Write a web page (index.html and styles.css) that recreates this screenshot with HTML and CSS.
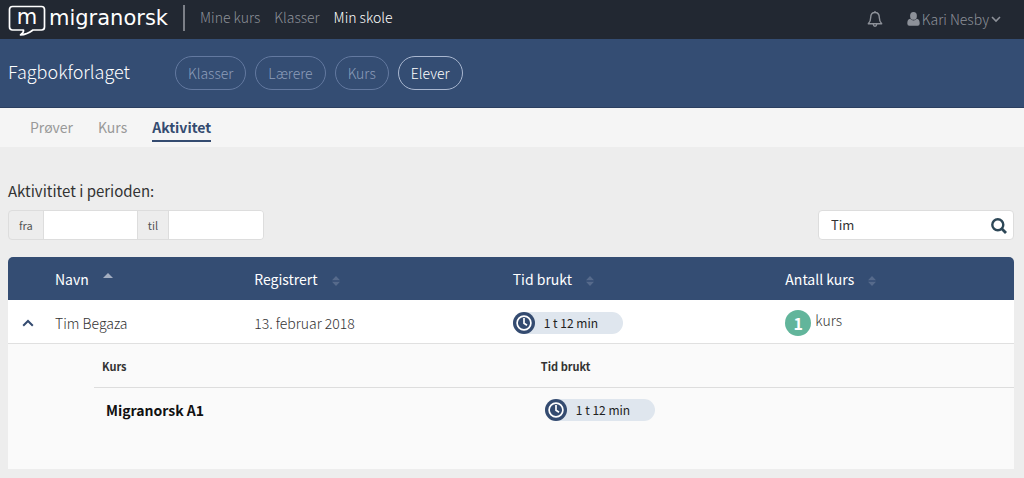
FILE: index.html
```html
<!DOCTYPE html>
<html lang="no">
<head>
<meta charset="utf-8">
<meta name="viewport" content="width=device-width, initial-scale=1">
<title>Migranorsk – Aktivitet</title>
<link rel="stylesheet" href="styles.css">
</head>
<body>
<svg class="defs" aria-hidden="true">
  <symbol id="clock" viewBox="0 0 22 22">
    <circle cx="11" cy="11" r="11" fill="#344b70"/>
    <circle cx="11" cy="11" r="6.9" fill="#344b70" stroke="#fff" stroke-width="1.7"/>
    <path d="M11 6V11.300L14 13.200" fill="none" stroke="#fff" stroke-width="1.700"/>
  </symbol>
  <symbol id="sort" viewBox="0 0 8 10">
    <path d="M0 4.2L4 0l4 4.2zM0 5.8L4 10l4-4.2z" fill="#566a8b"/>
  </symbol>
</svg>
<header class="topbar">
  <a class="brand" href="#">
    <span class="brand-mark">
      <svg class="brand-bubble" viewBox="0 0 38 32" aria-hidden="true"><path d="M4.5 1.500H33.500Q36.500 1.500 36.500 4.500V22Q36.500 25 33.500 25H25Q19 29.500 12.500 30Q16 27.500 15.500 25H4.500Q1.500 25 1.500 22V4.500Q1.500 1.500 4.500 1.500Z" fill="none" stroke="#fff" stroke-width="1.700" stroke-linejoin="round"/></svg>
      <span class="brand-letter">m</span>
    </span>
    <span class="brand-name">migranorsk</span>
  </a>
  <nav class="main-nav">
    <a href="#">Mine kurs</a>
    <a href="#">Klasser</a>
    <a class="active" href="#">Min skole</a>
  </nav>
  <div class="account">
    <button class="bell" type="button" aria-label="Varsler">
      <svg viewBox="0 0 16 18" width="16" height="18" fill="none" stroke="currentColor" stroke-width="1.4" stroke-linejoin="round"><path d="M8 1v1.500M8 2.500C5 2.500 3.700 4.800 3.700 7.500C3.700 10.500 2.900 12.200 1.300 13.800H14.700C13.100 12.200 12.300 10.500 12.300 7.500C12.300 4.800 11 2.500 8 2.500ZM6.300 14.500Q6.500 16.200 8 16.200T9.700 14.500"/></svg>
    </button>
    <button class="user" type="button">
      <svg viewBox="0 0 13 14" width="13" height="14" fill="currentColor"><ellipse cx="6.500" cy="3.900" rx="3.400" ry="3.900"/><path d="M3.200 6.700C1 7 .3 9 .3 11.500Q.3 13.700 2.300 13.700H10.700Q12.700 13.700 12.700 11.500C12.700 9 12 7 9.800 6.700Q8.500 8.400 6.500 8.400T3.200 6.700Z"/></svg>
      <span>Kari Nesby</span>
      <svg viewBox="0 0 10 7" width="10" height="7" fill="none" stroke="currentColor" stroke-width="1.600"><path d="M1 1l4 4 4-4"/></svg>
    </button>
  </div>
</header>
<div class="school-bar">
  <h1 class="school">Fagbokforlaget</h1>
  <nav class="pills">
    <a href="#">Klasser</a>
    <a href="#">Lærere</a>
    <a href="#">Kurs</a>
    <a class="active" href="#">Elever</a>
  </nav>
</div>
<nav class="tabs">
  <a href="#">Prøver</a>
  <a href="#">Kurs</a>
  <a class="active" href="#">Aktivitet</a>
</nav>
<main class="content">
  <h2 class="period-title">Aktivititet i perioden:</h2>
  <div class="filters">
    <div class="period">
      <label for="from">fra</label><input id="from" type="text">
      <label for="to">til</label><input id="to" type="text">
    </div>
    <div class="search">
      <input type="text" value="Tim" aria-label="Søk">
      <button type="button" aria-label="Søk"><svg viewBox="0 0 16 16" width="16" height="16" fill="none" stroke="#2d4757"><circle cx="6.800" cy="6.800" r="5.500" stroke-width="2.400"/><path d="M10.800 10.800l4.200 4.200" stroke-width="2.800"/></svg></button>
    </div>
  </div>
  <table class="students">
    <colgroup><col class="col-toggle"><col class="col-name"><col class="col-date"><col class="col-time"><col></colgroup>
    <thead>
      <tr>
        <th></th>
        <th>Navn<svg class="sort-up" viewBox="0 0 10 5" aria-hidden="true"><path d="M0 5L5 0l5 5z" fill="#a3aec1"/></svg></th>
        <th>Registrert<svg class="sort"><use href="#sort"/></svg></th>
        <th>Tid brukt<svg class="sort"><use href="#sort"/></svg></th>
        <th>Antall kurs<svg class="sort"><use href="#sort"/></svg></th>
      </tr>
    </thead>
    <tbody>
      <tr class="student">
        <td><button class="toggle" type="button" aria-label="Skjul kurs"><svg viewBox="0 0 12 8" width="12" height="8" fill="none" stroke="#344b70" stroke-width="2"><path d="M1.200 6.800L6 2l4.800 4.800"/></svg></button></td>
        <td>Tim Begaza</td>
        <td>13. februar 2018</td>
        <td><span class="time"><svg class="clock"><use href="#clock"/></svg>1 t 12 min</span></td>
        <td><span class="count"><b>1</b><span>kurs</span></span></td>
      </tr>
      <tr class="details">
        <td colspan="5">
          <table class="courses">
            <colgroup><col class="col-course"><col></colgroup>
            <thead><tr><th>Kurs</th><th>Tid brukt</th></tr></thead>
            <tbody><tr><td>Migranorsk A1</td><td><span class="time"><svg class="clock"><use href="#clock"/></svg>1 t 12 min</span></td></tr></tbody>
          </table>
        </td>
      </tr>
    </tbody>
  </table>
</main>
</body>
</html>
```
FILE: styles.css
```css
* { box-sizing: border-box; }
body {
  margin: 0;
  background: #ededed;
  color: #333;
  font: 300 14px/20px "Noto Sans CJK SC", "Open Sans", sans-serif;
}
a { color: inherit; text-decoration: none; }
button { padding: 0; border: 0; background: none; color: inherit; font: inherit; cursor: pointer; }
svg { display: block; flex: none; }
.defs { position: absolute; width: 0; height: 0; }

.topbar {
  display: flex;
  align-items: center;
  height: 39px;
  padding: 0 23px 4px 8px;
  background: #222832;
  color: #8d9199;
}
.brand {
  display: flex;
  align-items: center;
  height: 26px;
  padding-right: 15px;
  border-right: 2px solid #7c8088;
  color: #fff;
  font: 400 21px/26px "DejaVu Sans", sans-serif;
}
.brand-mark { position: relative; width: 38px; height: 26px; margin-right: 3px; }
.brand-bubble { position: absolute; top: 0; left: 0; width: 38px; height: 32px; }
.brand-letter { position: absolute; inset: 0; text-align: center; line-height: 25px; }
.brand-name { line-height: 26px; }
.main-nav { display: flex; gap: 14px; margin-left: 15px; padding-bottom: 1px; }
.main-nav .active { color: #fff; }
.account { display: flex; align-items: center; gap: 24px; margin-left: auto; padding-top: 3px; }
.user { display: flex; align-items: center; gap: 2px; }

.school-bar {
  display: flex;
  align-items: center;
  height: 69px;
  padding: 0 8px;
  border-bottom: 1px solid #2b3f60;
  background: #344d73;
}
.school { width: 167px; margin: 0; padding-bottom: 4px; color: #fff; font-size: 18px; font-weight: 300; line-height: 24px; }
.pills { display: flex; gap: 9px; color: #8d9dba; }
.pills a { padding: 6px 12px; border: 1px solid #6379a0; border-radius: 17px; }
.pills .active { border-color: #a9b7d0; color: #fff; }

.tabs {
  display: flex;
  gap: 25px;
  height: 39px;
  padding: 9px 30px 0;
  background: #f5f5f5;
  color: #999;
  font-weight: 400;
}
.tabs a { height: 25px; line-height: 20px; }
.tabs .active { border-bottom: 2px solid #344b70; color: #344b70; font-weight: 700; }

.content { padding: 33px 10px 9px 8px; }
.period-title { margin: 0 0 8px; font-size: 15px; font-weight: 400; line-height: 22px; }
.filters { display: flex; justify-content: space-between; margin-bottom: 17px; }
.period { display: flex; height: 30px; border: 1px solid #ddd; border-radius: 4px; overflow: hidden; }
.period label { padding: 0 10px; color: #555; font-size: 11px; font-weight: 400; line-height: 28px; }
.period input { width: 95px; border: 0; border-right: 1px solid #ddd; border-left: 1px solid #ddd; background: #fff; }
.period input:last-child { border-right: 0; }
.search { display: flex; width: 196px; height: 30px; padding: 2px 6px 0 12px; border: 1px solid #ddd; border-radius: 4px; background: #fff; }
.search input { flex: 1; min-width: 0; padding: 0 0 3px; border: 0; background: none; color: #333; font: 400 13px/20px "Noto Sans CJK SC", "Open Sans", sans-serif; }

table { width: 100%; border-spacing: 0; table-layout: fixed; }
th, td { padding: 0; text-align: left; }
.col-toggle { width: 47px; }
.col-name { width: 19.8%; }
.col-date { width: 25.7%; }
.col-time { width: 27.1%; }
.students { border-radius: 5px 5px 0 0; overflow: hidden; }
.students > thead th { height: 43px; background: #344d73; color: #fff; font-weight: 400; }
.sort, .sort-up { display: inline-block; margin-left: 14px; }
.sort { width: 8px; height: 10px; vertical-align: -1px; }
.sort-up { width: 10px; height: 5px; vertical-align: 7px; }
.student td { height: 44px; padding-top: 2px; border-bottom: 1px solid #e0e0e0; background: #fff; }
.toggle { display: block; margin-left: 14px; }
.time {
  display: flex;
  align-items: center;
  gap: 9px;
  width: 110px;
  height: 22px;
  border-radius: 11px;
  background: #dfe6ee;
  color: #222;
  font-size: 12px;
  font-weight: 400;
}
.clock { width: 22px; height: 22px; }
.count { display: flex; gap: 4px; }
.count b {
  width: 26px;
  height: 26px;
  border-radius: 50%;
  background: #62b59b;
  color: #fff;
  font-size: 16px;
  font-weight: 700;
  line-height: 26px;
  text-align: center;
}
.details > td { height: 125px; padding-left: 86px; background: #fafafa; vertical-align: top; }
.col-course { width: 47.7%; }
.courses th { height: 44px; padding-left: 8px; border-bottom: 1px solid #ddd; font-size: 11px; font-weight: 700; }
.courses td { height: 44px; padding-left: 12px; color: #111; font-weight: 700; }
.courses .time { color: #222; font-weight: 400; }
```
